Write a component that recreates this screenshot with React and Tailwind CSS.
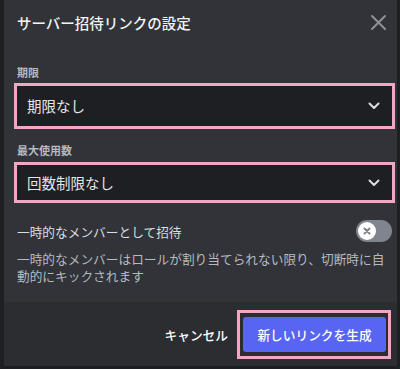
import React from "react";

const font = { fontFamily: '"Noto Sans CJK JP", "Noto Sans", sans-serif' };

function Chevron() {
  return (
    <svg width="12" height="8" viewBox="0 0 12 8" fill="none">
      <path d="M1.5 1.5 L6 6 L10.5 1.5" stroke="#dbdee1" strokeWidth="2" strokeLinecap="round" strokeLinejoin="round" />
    </svg>
  );
}

function Select({ text, h }) {
  return (
    <div className={`-ml-[3px] -mr-[3px] border-[3px] border-[#f2a6c4] bg-[#1e1f22] flex items-center justify-between pl-[10px] pr-[12px] ${h}`}>
      <span className="text-[14.5px] leading-[18px] text-[#e3e5e8]">{text}</span>
      <Chevron />
    </div>
  );
}

export default function App() {
  return (
    <div className="w-[400px] h-[369px] bg-[#1e1f22] pl-[4px] pr-[3px] overflow-hidden" style={font}>
      <div className="h-[366px] bg-[#313338] flex flex-col">
        <div className="h-[44px] flex items-center justify-between pl-[13px] pr-[10px]">
          <span className="text-[14.5px] leading-[19px] font-medium text-[#f2f3f5]">サーバー招待リンクの設定</span>
          <svg width="17" height="17" viewBox="0 0 17 17" fill="none">
            <path d="M2 2 L15 15 M15 2 L2 15" stroke="#8e9297" strokeWidth="2" strokeLinecap="round" />
          </svg>
        </div>
        <div className="pl-[13px] pr-[5px] flex flex-col">
          <div className="mt-[21px] h-[14px] text-[11px] leading-[14px] font-bold text-[#b5bac1]">期限</div>
          <div className="mt-[4px]">
            <Select text="期限なし" h="h-[46px]" />
          </div>
          <div className="mt-[14px] h-[14px] text-[11px] leading-[14px] font-bold text-[#b5bac1]">最大使用数</div>
          <div className="mt-[5px]">
            <Select text="回数制限なし" h="h-[41px]" />
          </div>
          <div className="mt-[17px] h-[22px] flex items-center justify-between">
            <span className="text-[12.7px] leading-[17px] text-[#dbdee1]">一時的なメンバーとして招待</span>
            <div className="w-[36px] h-[22px] rounded-full bg-[#80848e] flex items-center pl-[2px]">
              <div className="w-[18px] h-[18px] rounded-full bg-white flex items-center justify-center">
                <svg width="10" height="10" viewBox="0 0 10 10" fill="none">
                  <path d="M2.5 2.5 L7.5 7.5 M7.5 2.5 L2.5 7.5" stroke="#80848e" strokeWidth="2" strokeLinecap="round" />
                </svg>
              </div>
            </div>
          </div>
          <div className="mt-[8px] flex flex-col text-[12.7px] leading-[17px] text-[#b5bac1] whitespace-nowrap">
            <div className="h-[17px]">一時的なメンバーはロールが割り当てられない限り、切断時に自</div>
            <div className="h-[17px]">動的にキックされます</div>
          </div>
        </div>
        <div className="mt-auto h-[64px] bg-[#2b2d31] flex items-center justify-end pr-[6px]">
          <span className="mr-[9px] text-[12.7px] leading-[17px] font-medium text-white">キャンセル</span>
          <div className="border-[3px] border-[#f2a6c4] pl-[3px] pr-[2px] py-[4px]">
            <div className="w-[143px] h-[35px] rounded-[3px] bg-[#5865f2] flex items-center justify-center text-[12.7px] leading-[17px] font-medium text-white">
              新しいリンクを生成
            </div>
          </div>
        </div>
      </div>
    </div>
  );
}
